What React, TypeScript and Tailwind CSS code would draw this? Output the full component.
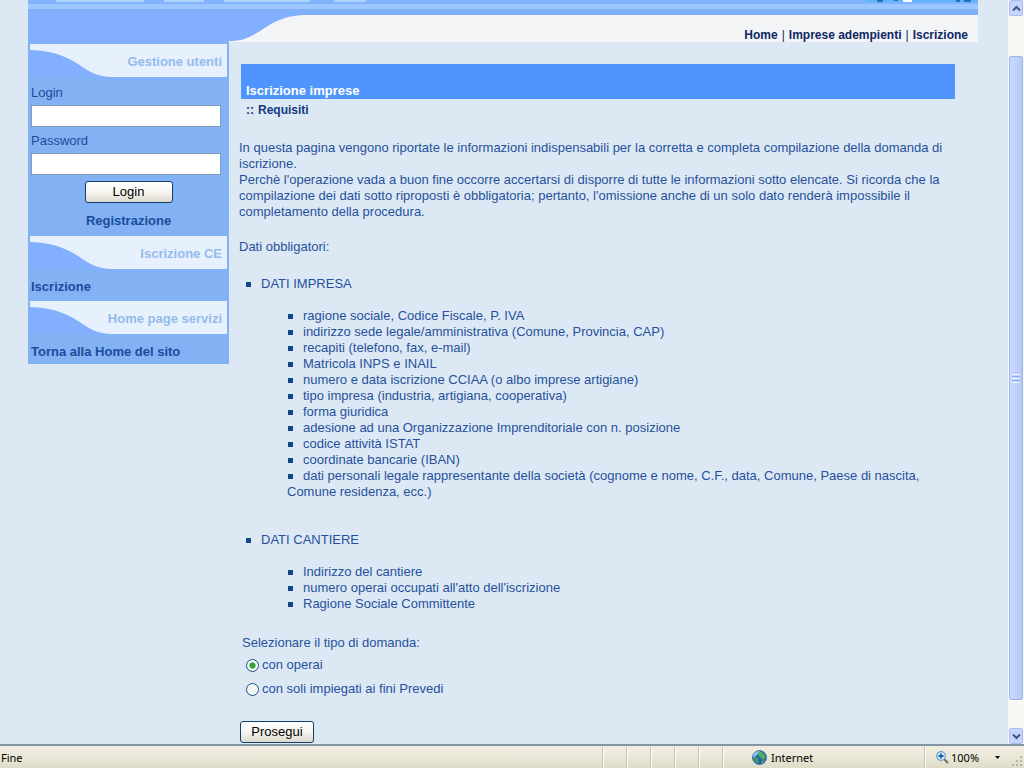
import type { ReactNode } from "react";

const companyData = [
  "ragione sociale, Codice Fiscale, P. IVA",
  "indirizzo sede legale/amministrativa (Comune, Provincia, CAP)",
  "recapiti (telefono, fax, e-mail)",
  "Matricola INPS e INAIL",
  "numero e data iscrizione CCIAA (o albo imprese artigiane)",
  "tipo impresa (industria, artigiana, cooperativa)",
  "forma giuridica",
  "adesione ad una Organizzazione Imprenditoriale con n. posizione",
  "codice attività ISTAT",
  "coordinate bancarie (IBAN)",
  "dati personali legale rappresentante della società (cognome e nome, C.F., data, Comune, Paese di nascita, Comune residenza, ecc.)",
];

const siteData = [
  "Indirizzo del cantiere",
  "numero operai occupati all'atto dell'iscrizione",
  "Ragione Sociale Committente",
];

function Bullet() {
  return <span className="mr-2.5 mb-px ml-px inline-block size-[5px] bg-[#14468c]" />;
}

function DataSection({ title, items, className }: { title: string; items: string[]; className: string }) {
  return (
    <section className={className}>
      <h2 className="pl-1.5">
        <Bullet />
        {title}
      </h2>
      <ul className="mt-4 pl-12">
        {items.map((item) => (
          <li key={item}>
            <Bullet />
            {item}
          </li>
        ))}
      </ul>
    </section>
  );
}

function PanelTitle({ children }: { children: ReactNode }) {
  return (
    <div className="flex h-[33px] bg-[#e7f1fd]">
      <svg className="h-full w-[82px] shrink-0" viewBox="0 0 82 33" aria-hidden="true">
        <path d="M0 6C22 7 34 11 48 20C60 28 68 33 82 33H0Z" fill="#82b0fe" />
      </svg>
      <h2 className="-ml-4 flex-1 pt-2.5 pr-[5px] text-right font-bold whitespace-nowrap text-[#93bcec]">{children}</h2>
    </div>
  );
}

function XpButton({ children, className }: { children: ReactNode; className: string }) {
  return (
    <button
      type="button"
      className={`h-[22px] rounded-[3px] border border-[#123f70] bg-linear-to-b from-white via-[#f6f5f0] to-[#dcd8cd] leading-4 text-black ${className}`}
    >
      {children}
    </button>
  );
}

function Sidebar() {
  return (
    <aside className="w-[201px] shrink-0 self-start bg-[#82b2f4] px-0.5 pt-0.5 text-[#1a4c9c]">
      <PanelTitle>Gestione utenti</PanelTitle>
      <form className="px-px pt-2">
        <label htmlFor="login" className="block">Login</label>
        <input id="login" type="text" className="mt-1 block h-[22px] w-[190px] border border-[#7f9db9] bg-white px-1" />
        <label htmlFor="password" className="mt-1.5 block">Password</label>
        <input id="password" type="password" className="mt-1 block h-[22px] w-[190px] border border-[#7f9db9] bg-white px-1" />
        <XpButton className="mx-auto mt-1.5 block w-[88px]">Login</XpButton>
      </form>
      <a href="#registrazione" className="block pt-2.5 pb-[7px] text-center font-bold">Registrazione</a>
      <PanelTitle>Iscrizione CE</PanelTitle>
      <a href="#iscrizione" className="block px-px pt-2.5 pb-1.5 font-bold">Iscrizione</a>
      <PanelTitle>Home page servizi</PanelTitle>
      <a href="#home" className="block px-px pt-2.5 pb-1 font-bold">Torna alla Home del sito</a>
    </aside>
  );
}

function Header() {
  return (
    <header>
      <div className="flex h-1 items-start bg-[#80b3fc]">
        <div className="ml-7 h-0.5 w-[88px] bg-[#acd2fe]" />
        <div className="ml-5 h-0.5 w-10 bg-[#acd2fe]" />
        <div className="ml-5 h-0.5 w-[86px] bg-[#acd2fe]" />
        <div className="ml-6 h-0.5 w-8 bg-[#acd2fe]" />
        <svg className="ml-auto h-1 w-28" viewBox="0 0 112 4" aria-hidden="true">
          <path d="M0 0h112v2H0z" fill="#5fb4fa" />
          <path d="M11 0h6v2h-6zM28 0h4v1h-4zM90 0h4v2h-4zM98 0h7v2h-7z" fill="#2470bd" />
          <path d="M37 0h9v2h-9z" fill="#fff" />
        </svg>
      </div>
      <div className="h-[5px] bg-[#9bc6ff]" />
      <div className="h-1.5 bg-[#82b0fb]" />
      <div className="flex h-[27px] bg-[#f3f4f6]">
        <svg className="h-full w-[280px] shrink-0" viewBox="0 0 280 27" aria-hidden="true">
          <path d="M0 0H280C257 0 246 7 235 14C223 22 215 26 201 26V27H0Z" fill="#82b0fe" />
        </svg>
        <nav className="flex flex-1 items-center justify-end gap-1 pt-3 pr-2.5 text-xs text-[#0d2763]">
          <a href="#home" className="font-bold">Home</a>
          <span>|</span>
          <a href="#imprese" className="font-bold">Imprese adempienti</a>
          <span>|</span>
          <a href="#iscrizione" className="font-bold">Iscrizione</a>
        </nav>
      </div>
    </header>
  );
}

function RadioOption({ id, label, defaultChecked }: { id: string; label: string; defaultChecked?: boolean }) {
  return (
    <div className="flex h-6 items-center gap-[3px] pl-[7px]">
      <input
        id={id}
        type="radio"
        name="tipo"
        defaultChecked={defaultChecked}
        className="size-[13px] appearance-none rounded-full border border-[#1c5180] bg-[#f4f6f5] checked:bg-radial checked:from-[#2fa52f] checked:from-35% checked:to-[#f4f6f5] checked:to-45%"
      />
      <label htmlFor={id}>{label}</label>
    </div>
  );
}

function Content() {
  return (
    <main className="min-w-0 flex-1 pt-[22px] pr-[23px] pl-2.5">
      <h1 className="ml-0.5 flex h-[35px] items-end bg-[#4f95fd] pl-[5px] font-bold text-white">Iscrizione imprese</h1>
      <p className="mt-[3px] flex gap-1 pl-[7px] text-xs/4 font-bold text-[#14397f]">
        <span>::</span>
        <span>Requisiti</span>
      </p>
      <p className="mt-[22px]">
        In questa pagina vengono riportate le informazioni indispensabili per la corretta e completa compilazione della domanda di iscrizione.
        <br />
        Perchè l'operazione vada a buon fine occorre accertarsi di disporre di tutte le informazioni sotto elencate. Si ricorda che la compilazione dei dati sotto riproposti è obbligatoria; pertanto, l'omissione anche di un solo dato renderà impossibile il completamento della procedura.
      </p>
      <p className="mt-[19px]">Dati obbligatori:</p>
      <DataSection title="DATI IMPRESA" items={companyData} className="mt-[21px]" />
      <DataSection title="DATI CANTIERE" items={siteData} className="mt-8" />
      <form>
        <fieldset className="mt-[23px]">
          <legend className="mb-0.5 pl-[3px]">Selezionare il tipo di domanda:</legend>
          <RadioOption id="operai" label="con operai" defaultChecked />
          <RadioOption id="impiegati" label="con soli impiegati ai fini Prevedi" />
        </fieldset>
        <XpButton className="mt-5 ml-px w-[74px]">Prosegui</XpButton>
      </form>
    </main>
  );
}

function ScrollArrow({ up }: { up?: boolean }) {
  return (
    <button
      type="button"
      aria-label={up ? "Scorri su" : "Scorri giù"}
      className="flex h-4 w-full shrink-0 items-center justify-center rounded-[2px] border border-[#a9bdf0] bg-[#c5d5fc]"
    >
      <svg className="size-[9px]" viewBox="0 0 9 9" fill="none" stroke="#3d5586" strokeWidth="2" aria-hidden="true">
        <path d={up ? "M1 6.5L4.5 3L8 6.5" : "M1 2.5L4.5 6L8 2.5"} />
      </svg>
    </button>
  );
}

function Scrollbar() {
  return (
    <div className="flex w-4 shrink-0 flex-col bg-[#f9f8f4] px-px">
      <ScrollArrow up />
      <div className="flex flex-1 flex-col pt-10 pb-7">
        <div className="flex flex-1 flex-col items-center justify-center gap-px rounded-[2px] border border-[#9fb5ee] bg-linear-to-r from-[#cbd9fd] to-[#b4c8f8]">
          <span className="h-px w-2 bg-[#eef4fe]" />
          <span className="h-px w-2 bg-[#8cb0f8]" />
          <span className="h-px w-2 bg-[#eef4fe]" />
          <span className="h-px w-2 bg-[#8cb0f8]" />
          <span className="h-px w-2 bg-[#eef4fe]" />
        </div>
      </div>
      <ScrollArrow />
    </div>
  );
}

function StatusBar() {
  return (
    <footer className="flex h-6 shrink-0 items-stretch border-t-2 border-[#8496a6] bg-linear-to-b from-[#f1eee0] via-[#ece8d9] to-[#dfdbc8] font-['Noto_Sans','Open_Sans',sans-serif] text-[11px] leading-none text-black">
      <span className="flex flex-1 items-center pl-px">Fine</span>
      {[0, 1, 2, 3, 4].map((cell) => (
        <span key={cell} className="w-6 border-l border-[#cbc7b5] shadow-[inset_1px_0_0_#fbfaf4]" />
      ))}
      <span className="flex w-[202px] items-center gap-1 border-l border-[#cbc7b5] pl-[29px] shadow-[inset_1px_0_0_#fbfaf4]">
        <svg className="size-[15px]" viewBox="0 0 15 15" aria-hidden="true">
          <circle cx="7.5" cy="7.5" r="7" fill="#2563ac" stroke="#3a6d94" strokeWidth=".8" />
          <path d="M1 5Q3 1 8 1Q6 4 4 6L1.500 8Z" fill="#8fc6e6" />
          <path d="M6 3L9 1.500L12.500 4L13.500 8L11 10L9 8L7 7Z" fill="#4fae62" />
          <path d="M3 7L6 8L7 11L6 13.500L3 12L1.500 9Z" fill="#3f9e63" />
          <path d="M10 11L12.500 10L11 12.800L9 13.500Z" fill="#67bb6a" />
        </svg>
        Internet
      </span>
      <span className="flex w-[100px] items-center border-l border-[#cbc7b5] pl-[11px] shadow-[inset_1px_0_0_#fbfaf4]">
        <svg className="mr-0.5 size-[13px]" viewBox="0 0 13 13" fill="none" aria-hidden="true">
          <path d="M8 8L12 12" stroke="#776b5c" strokeWidth="2" />
          <circle cx="5" cy="5" r="4.300" fill="#dff0fc" stroke="#6ba0c8" strokeWidth="1.200" />
          <path d="M5 2.500V7.500M2.500 5H7.500" stroke="#1763af" strokeWidth="1.800" />
        </svg>
        100%
        <svg className="ml-auto h-[3px] w-[5px]" viewBox="0 0 5 3" aria-hidden="true">
          <path d="M0 0H5L2.5 3Z" fill="#000" />
        </svg>
        <svg className="mr-px mb-px ml-3 size-[11px] self-end" viewBox="0 0 11 11" fill="#b5b19e" aria-hidden="true">
          <path d="M8 0h2v2H8zM4 4h2v2H4zM8 4h2v2H8zM0 8h2v2H0zM4 8h2v2H4zM8 8h2v2H8z" />
        </svg>
      </span>
    </footer>
  );
}

export default function App() {
  return (
    <div className="flex h-screen flex-col overflow-hidden bg-[#dce9f4] font-['Liberation_Sans',Arial,sans-serif] text-[13px] leading-4 text-[#27509c]">
      <div className="flex min-h-0 flex-1">
        <div className="min-w-0 flex-1 overflow-hidden pr-[30px] pl-7">
          <Header />
          <div className="flex">
            <Sidebar />
            <Content />
          </div>
        </div>
        <Scrollbar />
      </div>
      <StatusBar />
    </div>
  );
}
